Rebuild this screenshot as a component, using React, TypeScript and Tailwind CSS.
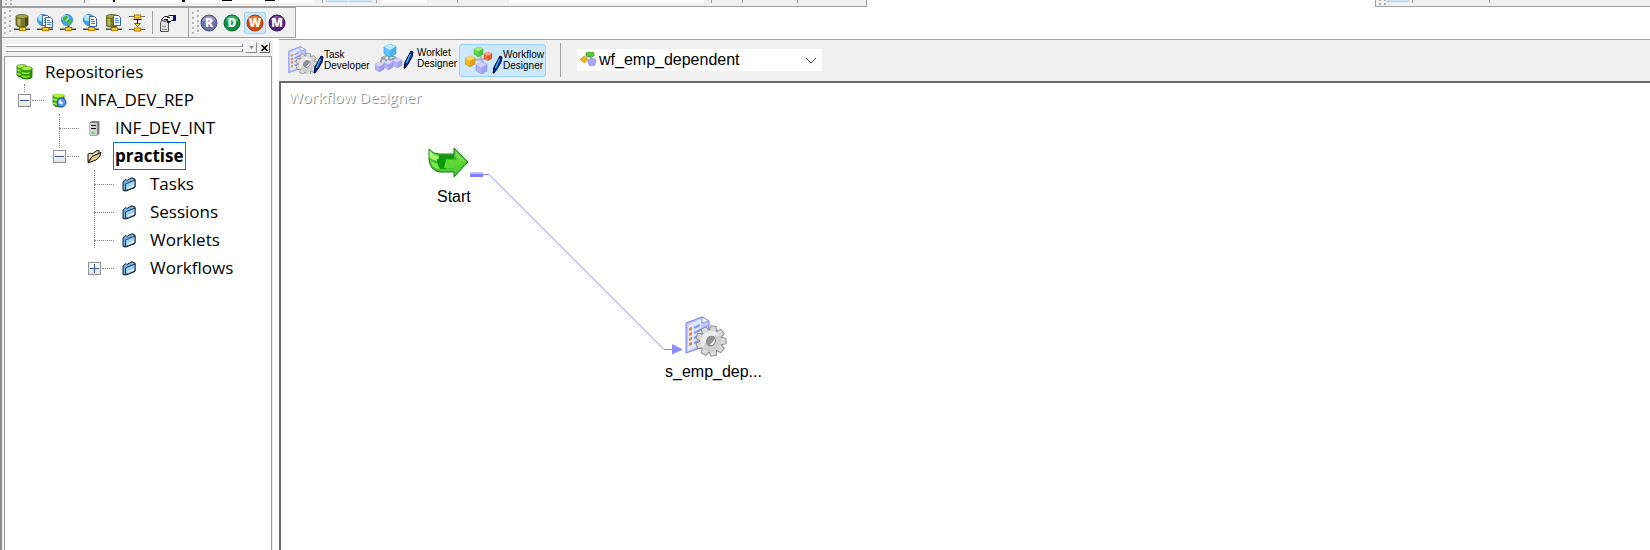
import React, { ReactNode } from "react";

function Db({ x = 0, y = 0 }: { x?: number; y?: number }) {
  return (
    <g transform={`translate(${x} ${y})`}>
      <path d="M0 2.5v8q0 2.500 6 2.500t6-2.500v-8z" fill="#77782a" stroke="#4c4d16" strokeWidth=".8" />
      <path d="M1.500 4v7l3 1V4z" fill="#b8b95c" />
      <path d="M9 4v8l3-1V3z" fill="#45461a" />
      <ellipse cx="6" cy="2.5" rx="6" ry="2" fill="#a5a64c" stroke="#55561a" strokeWidth=".7" />
    </g>
  );
}

function Globe({ cx, cy, r, land = false }: { cx: number; cy: number; r: number; land?: boolean }) {
  return (
    <g transform={`translate(${cx} ${cy})`}>
      <circle r={r} fill="#3fa6e6" stroke="#3a8cd0" strokeWidth="1" />
      <ellipse cx="-1.5" cy="-2" rx={r * 0.6} ry={r * 0.55} fill="#b5e8fc" />
      {land && <path d="M-4-3l4-2 1 3-3 3-2 0zM1 0l4-1-1 4-3 2-1-3z" fill="#49b83c" />}
    </g>
  );
}

function Page({ x, y }: { x: number; y: number }) {
  return (
    <g transform={`translate(${x} ${y})`}>
      <path d="M.5.5h5l2 2v8h-7z" fill="#fff" stroke="#3462b8" />
      <path d="M2 3.5h3M2 5.5h4M2 7.5h4" stroke="#4d7dd4" />
    </g>
  );
}

function Net() {
  return (
    <>
      <path d="M0 14.5h16" stroke="#9a9a9a" />
      <path d="M0 15.5h16" stroke="#4a4a4a" />
      <path d="M8.500 11v3" stroke="#444" strokeWidth="2" />
      <rect x="5.500" y="13.500" width="6" height="3" fill="#ffd028" stroke="#b87c00" />
    </>
  );
}

function ToolIcon({ kind }: { kind: string }) {
  return (
    <svg width="17" height="18" viewBox="0 0 17 18">
      {kind === "connect" && <><Net /><Db x={2} y={0} /></>}
      {kind === "copy" && <><Net /><Globe cx={6} cy={6} r={5.5} /><Page x={5} y={1} /><Page x={8} y={3} /></>}
      {kind === "web" && <><Net /><Globe cx={7} cy={6} r={5.5} land /></>}
      {kind === "webdoc" && <><Net /><Globe cx={6} cy={6} r={5.5} /><Page x={6} y={2} /></>}
      {kind === "dbdoc" && <><Net /><Db x={0} y={0} /><Page x={7} y={1} /></>}
      {kind === "link" && (
        <>
          <path d="M0 2.500h16M0 15.500h16" stroke="#6a6a6a" />
          <path d="M4.500 5.500h8M8.500 6v5" fill="none" stroke="#111" />
          <path d="M5.500 9.500h6l-3 3z" fill="#ffe028" stroke="#111" strokeWidth=".6" />
          <rect x="5.500" y="1" width="6" height="3" fill="#ffd028" stroke="#b87c00" />
          <rect x="5.500" y="14" width="6" height="3" fill="#ffd028" stroke="#b87c00" />
        </>
      )}
    </svg>
  );
}

function Properties() {
  return (
    <svg width="18" height="18" viewBox="0 0 18 18">
      <path d="M1.500 8.500v9h8v-9l-1-2h-6z" fill="#dcdcdc" stroke="#555" />
      <path d="M3 15.500h5" stroke="#35c435" />
      <path d="M3 12.500h4" stroke="#999" />
      <path d="M2.500 5.500l3-3h3l2-1h5v5h-3l-2 2h-2l0-2-3 1z" fill="#fff" stroke="#111" />
      <path d="M5 5.500h4M8 3.500h3M9 7.500h2" stroke="#111" />
      <path d="M14 1h3v6h-1l-2-1z" fill="#10107e" />
    </svg>
  );
}

function Ball({ letter, light, mid, dark }: { letter: string; light: string; mid: string; dark: string }) {
  return (
    <svg width="18" height="18" viewBox="0 0 18 18">
      <circle cx="9" cy="9" r="8" fill={mid} stroke={dark} strokeWidth="1" />
      <path d="M2.500 6.500a7 7 0 0 1 13 0q-6 4-13 0z" fill={light} opacity=".7" />
      <text x="9" y="13" textAnchor="middle" fontSize="12" fontWeight="900" fill="#fff" fontFamily="Open Sans, sans-serif">{letter}</text>
    </svg>
  );
}

function Grip() {
  return (
    <svg width="8" height="27" viewBox="0 0 8 27" className="shrink-0">
      {[1, 6, 11, 16, 21].map((y) => (
        <g key={y}>
          <path d={`M0 ${y + 2}h2v2h-2zM5 ${y}h2v2h-2z`} fill="#b4b4b4" />
          <path d={`M2 ${y + 3}h1v2h-2v-1h1zM7 ${y + 1}h1v2h-2v-1h1z`} fill="#fff" />
        </g>
      ))}
    </svg>
  );
}

const teeth = [0, 40, 80, 120, 160, 200, 240, 280, 320];

function Gear({ x, y }: { x: number; y: number }) {
  return (
    <g transform={`translate(${x} ${y}) scale(1.07)`}>
      <g fill="#c9c9c9" stroke="#8a8a8a" strokeWidth="1">
        {teeth.map((a) => (
          <path key={a} d="M-3.500-9.500l1-4.500h5l1 4.500z" transform={`rotate(${a + 10})`} />
        ))}
        <circle r="10.500" />
      </g>
      {teeth.map((a) => (
        <path key={a} d="M-3-9l1-4.500h4l1 4.500z" transform={`rotate(${a + 10})`} fill="#dadada" />
      ))}
      <circle r="10" fill="#cfcfcf" />
      <path d="M-9-3a9.500 9.500 0 0 1 17-2q-8-1-12 5t-4 7q-3-5-1-10z" fill="#ececec" />
      <ellipse rx="4" ry="4.600" transform="rotate(25)" fill="#929292" stroke="#858585" />
      <path d="M-1 3.600a4 4 0 0 0 4.500-5.600q-2 4-4.500 5.600z" fill="#f8f8f8" />
    </g>
  );
}

function SessionArt() {
  return (
    <>
      <path d="M1 7L17 1l7 4v24L1 37z" fill="#bccbff" stroke="#7f7af4" />
      <path d="M3 9l13-6v25L3 35z" fill="#dfeaff" />
      <path d="M17 1v6l7-2z" fill="#fff" stroke="#8580f2" strokeWidth=".8" />
      <path d="M9 12l6-3M9 17l8-4M9 22l6-3M9 27l4-2" stroke="#8794ee" strokeWidth="2" />
      <path d="M4 12l3-1v3l-3 1zM4 17l3-1v3l-3 1zM4 22l3-1v3l-3 1zM4 27l3-1v3l-3 1z" fill="#f5822c" />
      <Gear x={26} y={25} />
    </>
  );
}

function Pen({ x, y }: { x: number; y: number }) {
  return (
    <g transform={`translate(${x} ${y})`}>
      <path d="M7 0l2 1-1 5-4 7-3 4-1 0 1-6z" fill="#0b1c9f" stroke="#05093a" />
      <path d="M6.500 3l-4 9" stroke="#28bdf0" strokeWidth="1.500" />
    </g>
  );
}

function Cube({ x, y, s, light, mid, dark }: { x: number; y: number; s: number; light: string; mid: string; dark: string }) {
  return (
    <g transform={`translate(${x} ${y}) scale(${s})`}>
      <path d="M0 2.500l5-2.500 5 2v6l-5 3-5-3z" fill={mid} stroke={dark} strokeWidth=".5" />
      <path d="M0 2.500l5-2.500 5 2-5 3z" fill={light} />
      <path d="M5 5l5-3v6l-5 3z" fill={dark} opacity=".4" />
    </g>
  );
}

function TaskArt() {
  return (
    <svg width="36" height="28" viewBox="0 0 36 28" className="shrink-0">
      <g transform="scale(.72)"><SessionArt /></g>
      <Pen x={26} y={10} />
    </svg>
  );
}

function WorkletArt() {
  return (
    <svg width="42" height="28" viewBox="0 0 42 28" className="shrink-0">
      <path d="M5 21l2-7 6-3 7 2 3 4M14 9v9M7 14l6 3 7-3" fill="none" stroke="#9aa4b0" strokeWidth="2" />
      <Cube x={9} y={0} s={1.2} light="#b8ecff" mid="#5cc4fa" dark="#2f9be0" />
      <Cube x={0} y={18} s={0.9} light="#d8d8ff" mid="#b3b0f4" dark="#8a86dc" />
      <Cube x={9} y={16} s={0.9} light="#d8d8ff" mid="#b3b0f4" dark="#8a86dc" />
      <Cube x={18} y={14} s={0.9} light="#d8d8ff" mid="#b3b0f4" dark="#8a86dc" />
      <Pen x={29} y={7} />
    </svg>
  );
}

function WorkflowArt() {
  return (
    <svg width="38" height="28" viewBox="0 0 38 28" className="shrink-0">
      <path d="M9 14l11-1M15 9l4 10" stroke="#a9b4c2" strokeWidth="2" />
      <Cube x={9} y={1} s={0.9} light="#a6ee8a" mid="#5fd848" dark="#35a82a" />
      <Cube x={0} y={10} s={1} light="#ffdc60" mid="#f2b41c" dark="#c08408" />
      <Cube x={19} y={6} s={0.8} light="#ffa880" mid="#f0683a" dark="#c04a18" />
      <Cube x={11} y={16} s={1.1} light="#ceceff" mid="#b0b0f6" dark="#8a8ae0" />
      <Pen x={28} y={10} />
    </svg>
  );
}

function Arrow() {
  return (
    <svg width="42" height="32" viewBox="0 0 42 32">
      <path d="M1 2q4 5 10 5h15V1l14 14-14 15v-5H12Q2 24 1 12z" fill="#3fc42c" stroke="#1c7d18" />
      <path d="M1.500 3q3 5 9 6v5q-7-1-9-4z" fill="#a4ff6c" />
      <path d="M11 8h15v4H11z" fill="#169410" />
      <path d="M9 12h9v10h-6q-3-2-3-10z" fill="#0c9a06" />
      <path d="M18 13h10l6-3 4 5-11 6H16z" fill="#5fd83a" />
      <path d="M2 13q4 4 7 3l3 6q-8 0-10-9z" fill="#7fe850" />
      <path d="M12 22h15v-3l9-2-9 10v-3H14z" fill="#52cc38" />
      <path d="M27 3l11 12-10-4z" fill="#74e050" />
    </svg>
  );
}

function RepoIcon() {
  return (
    <svg width="17" height="16" viewBox="0 0 17 16" className="shrink-0">
      <path d="M1 2v9q0 2 5 2V2z" fill="#3fae10" stroke="#175c08" strokeWidth=".8" />
      <path d="M5 4v9q0 2 5.500 2t5.500-2V4z" fill="#2f9a10" stroke="#175c08" strokeWidth=".8" />
      <ellipse cx="6" cy="2.500" rx="5" ry="2" fill="#b9f24a" stroke="#287a10" strokeWidth=".6" />
      <ellipse cx="10.500" cy="4.500" rx="5.500" ry="2" fill="#a8f03e" stroke="#287a10" strokeWidth=".6" />
      <path d="M5.500 8.500q5 2 8 0M5.500 12q5 2 8 0M1 6l4 1M1 9.500l4 1" fill="none" stroke="#98ee2e" strokeWidth="1.500" />
    </svg>
  );
}

function RepoOnIcon() {
  return (
    <svg width="15" height="15" viewBox="0 0 15 15" className="shrink-0">
      <path d="M1 2v9q1 3 6 3t5-3V2z" fill="#43ae14" stroke="#1b6a0c" strokeWidth=".8" />
      <ellipse cx="6.500" cy="2.500" rx="5.500" ry="2" fill="#aef03c" />
      <path d="M1 6q4 2 7 1M1 10q2 1 4 1" stroke="#b9f552" strokeWidth="1.500" fill="none" />
      <circle cx="9.500" cy="9.500" r="4.500" fill="#5b9cf0" stroke="#1c3fac" />
      <path d="M9 6.500q-3 1-2 4l3 1 1-2-2-1z" fill="#e4f2ff" />
    </svg>
  );
}

function ServerIcon() {
  return (
    <svg width="11" height="15" viewBox="0 0 11 15" className="shrink-0">
      <path d="M1 2l2-1.500h7v12L8 14.500H1z" fill="#888" stroke="#666" strokeWidth=".8" />
      <path d="M1 2h7v12.500H1z" fill="#d2d2d2" />
      <path d="M2 4.500h5M2 7.500h5" stroke="#111" />
      <path d="M2 12h4" stroke="#1ee01e" />
    </svg>
  );
}

function OpenFolder() {
  return (
    <svg width="15" height="15" viewBox="0 0 15 15" className="shrink-0">
      <path d="M1 13V5l3-1 1 1 5-3.500 2 0v3L5 8z" fill="#ecdca4" stroke="#111" />
      <path d="M1 14L5 7.500l9-4-1.500 4.500-3.500 3z" fill="#dcc888" stroke="#111" />
    </svg>
  );
}

function BlueFolder() {
  return (
    <svg width="14" height="15" viewBox="0 0 14 15" className="shrink-0">
      <path d="M1 13.500V5l3-2.500 1 1 4-2.500h2l1 1h1v8.500L4 14z" fill="#74b4ec" stroke="#101820" />
      <path d="M3.500 13.500V7l9.500-4v7z" fill="#9cd0f8" stroke="#101820" strokeWidth=".8" />
      <path d="M5.500 11.500l6-3" stroke="#d5efff" strokeWidth="2" />
    </svg>
  );
}

function Expander({ open }: { open: boolean }) {
  return (
    <button aria-label={open ? "Collapse" : "Expand"} className="flex size-[13px] shrink-0 items-center justify-center border border-[#919191] bg-linear-to-b from-white to-[#e4e4e4]">
      <svg width="9" height="9" viewBox="0 0 9 9">
        <path d={open ? "M0 4.500h9" : "M0 4.500h9M4.500 0v9"} stroke="#35559c" />
      </svg>
    </button>
  );
}

const dots = "border-t border-dotted border-[#808080]";

function Row({ indent, toggle, icon, label, selected }: { indent: string; toggle?: "open" | "closed"; icon: ReactNode; label: string; selected?: boolean }) {
  return (
    <li className={`flex h-7 items-center ${indent}`}>
      {toggle ? (
        <>
          <Expander open={toggle === "open"} />
          <span className={`ml-px w-3 ${dots}`} />
        </>
      ) : (
        <span className={`ml-[6px] w-5 ${dots}`} />
      )}
      <span className="flex w-[35px] shrink-0 justify-center pr-[5px]">{icon}</span>
      <span className={selected ? "-ml-px border border-[#0078d7] px-px leading-[26px] font-bold" : "pl-px leading-7"}>{label}</span>
    </li>
  );
}

function Tree() {
  return (
    <nav aria-label="Repositories" className="flex-1 border border-b-0 border-[#9a9a9a] bg-white pt-px font-['Open_Sans',sans-serif] text-[17px] text-black">
      <div className="flex h-7 items-center gap-3 pl-[11px]">
        <RepoIcon />
        <span>Repositories</span>
      </div>
      <ul className="relative">
        <li aria-hidden="true" className="absolute top-[-2px] left-[19px] h-2 border-l border-dotted border-[#808080]" />
        <li aria-hidden="true" className="absolute top-7 left-[54px] h-[34px] border-l border-dotted border-[#808080]" />
        <li aria-hidden="true" className="absolute top-[84px] left-[89px] h-[78px] border-l border-dotted border-[#808080]" />
        <Row indent="pl-[13px]" toggle="open" icon={<RepoOnIcon />} label="INFA_DEV_REP" />
        <Row indent="pl-12" icon={<ServerIcon />} label="INF_DEV_INT" />
        <Row indent="pl-12" toggle="open" icon={<OpenFolder />} label="practise" selected />
        <Row indent="pl-[83px]" icon={<BlueFolder />} label="Tasks" />
        <Row indent="pl-[83px]" icon={<BlueFolder />} label="Sessions" />
        <Row indent="pl-[83px]" icon={<BlueFolder />} label="Worklets" />
        <Row indent="pl-[83px]" toggle="closed" icon={<BlueFolder />} label="Workflows" />
      </ul>
    </nav>
  );
}

function DesignerTab({ art, top, bottom, active }: { art: ReactNode; top: string; bottom: string; active?: boolean }) {
  return (
    <button className={`flex h-[33px] w-[87px] items-center rounded-[3px] border pl-[5px] text-left font-['Liberation_Sans',sans-serif] text-[10px] leading-[11px] font-medium whitespace-nowrap text-black ${active ? "border-[#99d1ff] bg-[#cce8ff]" : "border-transparent"}`}>
      {art}
      <span>{top}<br />{bottom}</span>
    </button>
  );
}

const tools = ["connect", "copy", "web", "webdoc", "dbdoc", "link"];

export default function App() {
  return (
    <div className="flex min-h-screen bg-[#f0f0f0]">
      <div className="w-[2px] bg-[#8c8c90]" />
      <div className="flex min-w-0 flex-1 flex-col">
        <div className="flex h-[7px] justify-between bg-white">
          <div className="flex w-[865px] border-r border-b border-[#a0a0a0] bg-[#f0f0f0] *:shrink-0">
            <svg width="8" height="5" className="ml-[3px]"><path d="M0 3h2v2H0zM5 3h2v2H5zM5 0h2v1H5zM0 0h2v1H0z" fill="#b4b4b4" /></svg>
            <span className="ml-[71px] h-[3px] w-px bg-[#a0a0a0]" />
            <span className="ml-[5px] h-[3px] w-56 bg-white">
              <svg width="200" height="3" className="block"><path d="M23 0h2v2h-2zM92 0h3v2h-3zM132 0h10v1h-10zM175 0h10v1h-10z" fill="#000" /></svg>
            </span>
            <span className="ml-2 h-[3px] w-px bg-[#a0a0a0]" />
            <span className="ml-[3px] h-[2px] w-[22px] border-b border-[#99d1ff] bg-[#cce8ff]" />
            <span className="ml-px h-[2px] w-[23px] border-b border-[#99d1ff] bg-[#cce8ff]" />
            <span className="ml-1 h-[3px] w-px bg-[#a0a0a0]" />
            <span className="ml-[5px] h-[3px] w-[45px] bg-white" />
            <span className="ml-[30px] h-[3px] w-px bg-[#a0a0a0]" />
            <span className="ml-[51px] h-[3px] w-[195px] bg-white" />
            <span className="ml-[7px] h-[3px] w-px bg-[#a0a0a0]" />
            <span className="ml-[30px] h-[3px] w-px bg-[#a0a0a0]" />
            <span className="ml-[54px] h-[3px] w-px bg-[#a0a0a0]" />
          </div>
          <div className="flex w-[275px] border-b border-l border-[#a0a0a0] bg-[#f0f0f0] *:shrink-0">
            <svg width="8" height="5" className="ml-[3px]"><path d="M0 3h2v2H0zM5 3h2v2H5zM5 0h2v1H5zM0 0h2v1H0z" fill="#b4b4b4" /></svg>
            <span className="h-[2px] w-[22px] border-b border-[#99d1ff] bg-[#cce8ff]" />
            <span className="ml-[3px] h-[3px] w-px bg-[#a0a0a0]" />
            <span className="ml-[76px] h-[3px] w-px bg-[#a0a0a0]" />
          </div>
        </div>

        <div className="flex h-8 bg-white">
          <div className="flex h-[31px] items-center border-t border-r border-b border-[#a0a0a0] bg-[#f0f0f0] pr-[11px] pl-[2px]">
            <Grip />
            <div className="ml-[2px] flex gap-[6px]">
              {tools.map((t) => (
                <button key={t} aria-label={t}><ToolIcon kind={t} /></button>
              ))}
            </div>
            <span className="mx-[6px] h-[23px] w-px bg-[#a0a0a0]" />
            <button aria-label="Properties"><Properties /></button>
          </div>
          <div className="flex h-[31px] items-center border-t border-r border-b border-[#a0a0a0] bg-[#f0f0f0] pr-[7px] pl-[3px]">
            <Grip />
            <button aria-label="Repository Manager" className="pr-[2px]"><Ball letter="R" light="#a6aacd" mid="#6a70a4" dark="#4c5284" /></button>
            <button aria-label="Designer" className="px-[3px]"><Ball letter="D" light="#4cc878" mid="#0c9040" dark="#06682c" /></button>
            <button aria-label="Workflow Manager" className="rounded-[2px] border border-[#99d1ff] bg-[#cce8ff] px-px py-px"><Ball letter="W" light="#f09050" mid="#d84a0c" dark="#a83404" /></button>
            <button aria-label="Workflow Monitor" className="px-[2px]"><Ball letter="M" light="#8c68b0" mid="#502080" dark="#381060" /></button>
          </div>
        </div>

        <div className="flex flex-1">
          <aside className="flex w-[277px] shrink-0 flex-col border-r-[6px] border-white pr-px pl-[2px]">
            <div className="flex h-[17px] items-center">
              <div className="ml-[2px] flex flex-1 flex-col gap-[2px]">
                <span className="h-[3px] border-r border-b border-[#a0a0a0] bg-white" />
                <span className="h-[3px] border-r border-b border-[#a0a0a0] bg-white" />
              </div>
              <button aria-label="Panel menu" className="ml-[2px] flex h-[11px] w-3 items-center justify-center border border-t-white border-r-[#8c8c8c] border-b-[#8c8c8c] border-l-white">
                <svg width="5" height="3"><path d="M0 0h5L2.500 3z" fill="#909090" /></svg>
              </button>
              <button aria-label="Close panel" className="mr-[2px] ml-[2px] flex h-[11px] w-[11px] items-center justify-center border border-t-white border-r-[#606060] border-b-[#606060] border-l-white">
                <svg width="7" height="6"><path d="M.5 0l6 6M6.500 0l-6 6" stroke="#000" strokeWidth="1.500" /></svg>
              </button>
            </div>
            <Tree />
          </aside>

          <main className="flex min-w-0 flex-1 flex-col">
            <div className="flex h-[42px] items-center border-t border-[#a0a0a0] pb-px pl-[3px]">
              <DesignerTab art={<TaskArt />} top="Task" bottom="Developer" />
              <div className="-mt-1"><DesignerTab art={<WorkletArt />} top="Worklet" bottom="Designer" /></div>
              <div className="ml-[3px]"><DesignerTab art={<WorkflowArt />} top="Workflow" bottom="Designer" active /></div>
              <span className="mr-[16px] ml-[14px] h-[34px] w-px bg-[#a0a0a0]" />
              <button aria-label="Workflow" aria-haspopup="listbox" className="flex h-[22px] w-[245px] items-center bg-white pl-[3px] font-['Liberation_Sans',sans-serif] text-base text-black">
                <svg width="17" height="16" viewBox="0 0 17 16">
                  <path d="M6 5h5v5" fill="none" stroke="#999" />
                  <path d="M0 7.500L4.500 4 8 7.500 4.500 11z" fill="#f4b416" stroke="#b87808" strokeWidth=".6" />
                  <path d="M6 1l3-1h4l1 1v3l-3 1-5-1z" fill="#5ac83a" stroke="#2c8a1c" strokeWidth=".6" />
                  <path d="M8 8l4-2 4 2-1 5-5 1-2-3z" fill="#aaaaf4" stroke="#7878c8" strokeWidth=".6" />
                </svg>
                <span className="ml-[2px] flex-1 text-left">wf_emp_dependent</span>
                <svg width="12" height="7" viewBox="0 0 12 7" className="mr-[5px]"><path d="M1 1l5 5 5-5" fill="none" stroke="#555" /></svg>
              </button>
            </div>
            <div className="relative flex-1 border-t-2 border-l-2 border-[#696969] bg-white font-['Liberation_Sans',sans-serif] text-base text-black">
              <h1 className="pt-[2px] pl-2 font-['Open_Sans',sans-serif] text-[15px] leading-6 text-white [text-shadow:1px_1px_0_#909090]">Workflow Designer</h1>
              <svg className="absolute top-0 left-0" width="420" height="280" viewBox="0 0 420 280">
                <path d="M189 90h13" stroke="#c0c0ff" strokeWidth="2" />
                <path d="M189 92.500h13" stroke="#8080ff" strokeWidth="3" />
                <path d="M202 91.500h6L383 266.500h9" fill="none" stroke="#8080ff" />
                <path d="M391 261l11 5.500-11 5z" fill="#8c8cff" />
              </svg>
              <div className="absolute top-[64px] left-[147px]"><Arrow /></div>
              <span className="absolute top-[102px] left-[156px]">Start</span>
              <div className="absolute top-[233px] left-[404px]">
                <svg width="42" height="42" viewBox="0 0 42 42"><SessionArt /></svg>
              </div>
              <span className="absolute top-[277px] left-[384px]">s_emp_dep...</span>
            </div>
          </main>
        </div>
      </div>
    </div>
  );
}
